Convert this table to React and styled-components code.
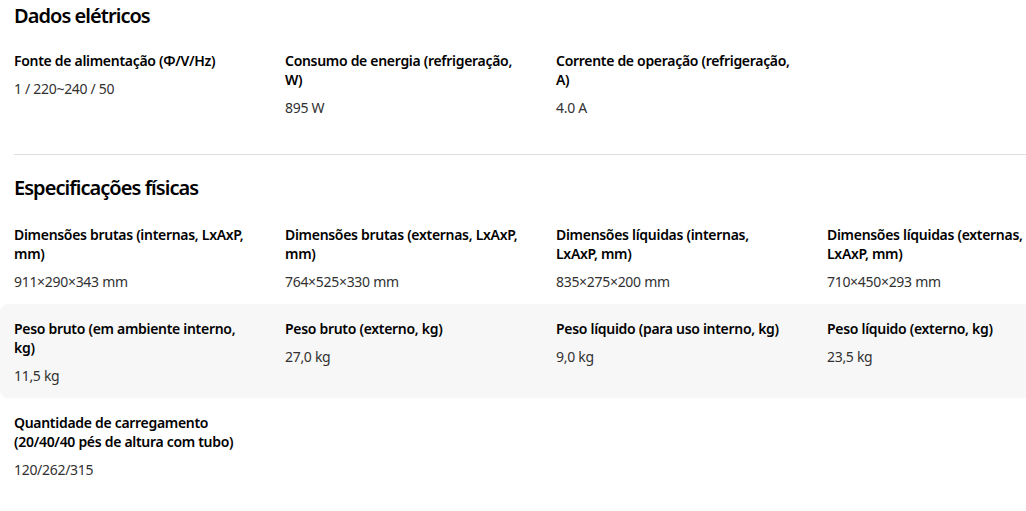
import React from "react";
import styled, { createGlobalStyle } from "styled-components";

const Global = createGlobalStyle`
  html, body { margin: 0; padding: 0; background: #fff; overflow: hidden; }
  body { font-family: "Noto Sans", "Open Sans", Arial, sans-serif; color: #000; }
`;

const Page = styled.div`
  width: 1080px;
  padding-top: 2px;
`;

const Section = styled.section`
  padding-top: ${(p) => p.$top || 0}px;
`;

const Heading = styled.h2`
  margin: 0 14px ${(p) => p.$gap || 6}px;
  font-size: 20px;
  line-height: 28px;
  font-weight: 600;
  letter-spacing: -0.95px;
  color: #000;
`;

const Row = styled.div`
  display: grid;
  grid-template-columns: repeat(4, 235px);
  column-gap: 36px;
  padding: 15px 14px 12px;
  border-radius: 8px;
  background: ${(p) => (p.$shaded ? "#f7f7f7" : "transparent")};
`;

const Item = styled.div`
  display: flex;
  flex-direction: column;
  gap: 9px;
`;

const Label = styled.div`
  font-size: 14px;
  line-height: 19px;
  font-weight: 600;
  letter-spacing: -0.3px;
  color: #000;
`;

const Value = styled.div`
  font-size: 14px;
  line-height: 20px;
  font-weight: 400;
  letter-spacing: -0.3px;
  color: #313131;
`;

const Divider = styled.hr`
  margin: 24px 14px 0;
  border: 0;
  border-top: 1px solid #dddddd;
`;

const electric = [
  ["Fonte de alimentação (Φ/V/Hz)", "1 / 220~240 / 50"],
  ["Consumo de energia (refrigeração, W)", "895 W"],
  ["Corrente de operação (refrigeração, A)", "4.0 A"],
];

const physical = [
  [
    ["Dimensões brutas (internas, LxAxP, mm)", "911×290×343 mm"],
    ["Dimensões brutas (externas, LxAxP, mm)", "764×525×330 mm"],
    ["Dimensões líquidas (internas, LxAxP, mm)", "835×275×200 mm"],
    ["Dimensões líquidas (externas, LxAxP, mm)", "710×450×293 mm"],
  ],
  [
    ["Peso bruto (em ambiente interno, kg)", "11,5 kg"],
    ["Peso bruto (externo, kg)", "27,0 kg"],
    ["Peso líquido (para uso interno, kg)", "9,0 kg"],
    ["Peso líquido (externo, kg)", "23,5 kg"],
  ],
  [["Quantidade de carregamento (20/40/40 pés de altura com tubo)", "120/262/315"]],
];

const Spec = ({ label, value }) => (
  <Item>
    <Label>{label}</Label>
    <Value>{value}</Value>
  </Item>
);

export default function App() {
  return (
    <Page>
      <Global />
      <Section>
        <Heading>Dados elétricos</Heading>
        <Row>
          {electric.map(([l, v]) => (
            <Spec key={l} label={l} value={v} />
          ))}
        </Row>
      </Section>
      <Divider />
      <Section $top={19}>
        <Heading $gap={8}>Especificações físicas</Heading>
        {physical.map((row, i) => (
          <Row key={i} $shaded={i === 1}>
            {row.map(([l, v]) => (
              <Spec key={l} label={l} value={v} />
            ))}
          </Row>
        ))}
      </Section>
    </Page>
  );
}
